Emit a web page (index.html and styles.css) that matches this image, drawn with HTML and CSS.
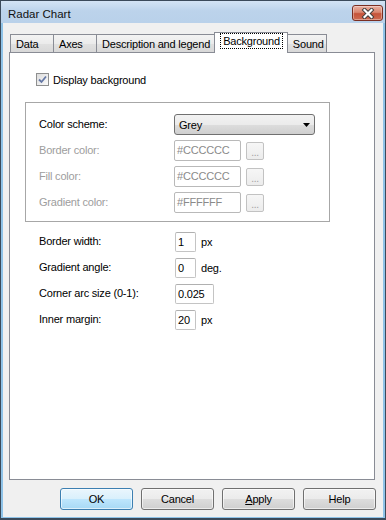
FILE: index.html
```html
<!DOCTYPE html>
<html lang="en">
<head>
  <meta charset="UTF-8" />
  <title>Radar Chart</title>
  <link rel="stylesheet" href="styles.css">
</head>
<body>

  <div class="window">
    <div class="titlebar">
      <span class="title">Radar Chart</span>
      <div class="close">
        <svg width="14" height="11" viewBox="0 0 14 11">
          <path d="M3.5 2 L10.5 9 M10.5 2 L3.5 9" stroke="#3b3b3b" stroke-width="4" stroke-linecap="square"/>
          <path d="M3.5 2 L10.5 9 M10.5 2 L3.5 9" stroke="#ffffff" stroke-width="2.2" stroke-linecap="square"/>
        </svg>
      </div>
    </div>

    <div class="client">
      <div class="tabs">
        <div class="tab wide">Data</div>
        <div class="tab wide">Axes</div>
        <div class="tab">Description and legend</div>
        <div class="tab active"><span class="focus">Background</span></div>
        <div class="tab last">Sound</div>
      </div>

      <div class="panel">
        <div class="check">
          <span class="box">
            <svg width="11" height="11" viewBox="0 0 11 11">
              <path d="M2 5.5 L4.5 8 L9 2.5" fill="none" stroke="#6578a6" stroke-width="1.8"/>
            </svg>
          </span>
          Display background
        </div>

        <div class="group">
          <div class="row">
            <span class="label">Color scheme:</span>
            <div class="select">
              <span>Grey</span>
              <svg width="7" height="4" viewBox="0 0 7 4"><polygon points="0,0 7,0 3.5,4" fill="#000"/></svg>
            </div>
          </div>
          <div class="row disabled">
            <span class="label">Border color:</span>
            <span class="color-input">#CCCCCC</span>
            <span class="dots">...</span>
          </div>
          <div class="row disabled">
            <span class="label">Fill color:</span>
            <span class="color-input">#CCCCCC</span>
            <span class="dots">...</span>
          </div>
          <div class="row disabled">
            <span class="label">Gradient color:</span>
            <span class="color-input">#FFFFFF</span>
            <span class="dots">...</span>
          </div>
        </div>

        <div class="settings">
          <div class="setting">
            <span class="label">Border width:</span>
            <span class="field small">1</span>
            <span class="unit">px</span>
          </div>
          <div class="setting">
            <span class="label">Gradient angle:</span>
            <span class="field small">0</span>
            <span class="unit">deg.</span>
          </div>
          <div class="setting">
            <span class="label">Corner arc size (0-1):</span>
            <span class="field medium">0.025</span>
          </div>
          <div class="setting">
            <span class="label">Inner margin:</span>
            <span class="field small">20</span>
            <span class="unit">px</span>
          </div>
        </div>
      </div>

      <div class="buttons">
        <div class="button default">OK</div>
        <div class="button">Cancel</div>
        <div class="button"><u>A</u>pply</div>
        <div class="button">Help</div>
      </div>
    </div>
  </div>

</body>
</html>
```

FILE: styles.css
```css
body {
  margin: 0;
  font-family: "Liberation Sans", Arial, sans-serif;
  font-size: 11px;
  letter-spacing: -0.2px;
  color: #000;
}

.window {
  width: 386px;
  height: 520px;
  box-sizing: border-box;
  border: 1px solid #3b4a5a;
  border-bottom-width: 2px;
  display: flex;
  flex-direction: column;
  background: #bcd3ea;
}

.titlebar {
  height: 22px;
  flex-shrink: 0;
  display: flex;
  justify-content: space-between;
  align-items: flex-start;
  padding: 0 2px 0 7px;
  background: linear-gradient(#d3e3f4, #bcd3eb 45%, #b9d1ea);
}

.title {
  font-size: 11.5px;
  letter-spacing: 0;
  line-height: 14px;
  margin-top: 6px;
  color: #111;
}

.close {
  width: 31px;
  height: 16px;
  margin-top: 4px;
  box-sizing: border-box;
  border: 1px solid #7a2e22;
  border-radius: 3px;
  background: linear-gradient(#eab0a2, #d98670 45%, #c5533a 55%, #cf6b52);
  box-shadow: inset 0 0 0 1px rgba(255, 255, 255, 0.35);
  display: flex;
  align-items: center;
  justify-content: center;
}

.client {
  flex: 1;
  display: flex;
  flex-direction: column;
  background: #f0f0f0;
  border: 2px solid #8fc3e8;
  border-top: 0;
  border-bottom-width: 1px;
  padding: 9px 8px 7px 6px;
}

.tabs {
  display: flex;
  align-items: flex-end;
  height: 21px;
  margin-left: 1px;
  margin-bottom: -1px;
  position: relative;
  z-index: 1;
}

.tab {
  height: 18px;
  box-sizing: border-box;
  margin: 0 -1px 1px 0;
  padding: 2px 4px 0 5px;
  line-height: 14px;
  border: 1px solid #898c95;
  border-bottom: 0;
  background: linear-gradient(#f3f3f3, #ebebeb 50%, #e1e1e1 50%, #d8d8d8);
  white-space: nowrap;
}

.tab.wide {
  min-width: 44px;
}

.tab.last {
  padding-right: 2px;
}

.tab.active {
  height: 21px;
  margin-bottom: 0;
  padding: 1px 5px 0 6px;
  background: #fff;
  position: relative;
  z-index: 2;
}

.focus {
  display: inline-block;
  line-height: 14px;
  padding: 0 2px;
  outline: 1px dotted #000;
}

.panel {
  height: 428px;
  box-sizing: border-box;
  border: 1px solid #898c95;
  background: #fff;
  padding: 20px 0 0 15px;
}

.check {
  display: flex;
  align-items: center;
  gap: 4px;
  height: 13px;
  margin-left: 11px;
}

.box {
  width: 13px;
  height: 13px;
  box-sizing: border-box;
  border: 1px solid #8e8f8f;
  background: linear-gradient(135deg, #dcdcdc, #fbfbfb);
  display: flex;
  align-items: center;
  justify-content: center;
}

.group {
  width: 305px;
  box-sizing: border-box;
  margin: 16px 0 0 0;
  border: 1px solid #a7a7a7;
  padding: 11px 0 8px 13px;
  display: flex;
  flex-direction: column;
  gap: 5px;
}

.row {
  display: flex;
  align-items: center;
  height: 21px;
}

.row .label {
  width: 135px;
  margin-top: -2px;
}

.row.disabled .label {
  color: #9d9d9d;
}

.select {
  width: 141px;
  height: 21px;
  box-sizing: border-box;
  border: 1px solid #707070;
  border-radius: 3px;
  background: linear-gradient(#f2f2f2, #ebebeb 50%, #dddddd 50%, #cfcfcf);
  display: flex;
  align-items: center;
  justify-content: space-between;
  padding: 0 4px 0 4px;
}

.color-input {
  width: 67px;
  height: 21px;
  box-sizing: border-box;
  border: 1px solid #b9b9b9;
  border-radius: 2px;
  padding-left: 2px;
  line-height: 19px;
  color: #8a8a8a;
}

.dots {
  width: 18px;
  height: 18px;
  box-sizing: border-box;
  margin-left: 5px;
  border: 1px solid #c2c2c2;
  border-radius: 2px;
  background: linear-gradient(#f6f6f6, #ececec);
  color: #a0a0a0;
  font-size: 10px;
  text-align: center;
  line-height: 19px;
}

.settings {
  margin: 10px 0 0 14px;
  display: flex;
  flex-direction: column;
  gap: 6px;
}

.setting {
  display: flex;
  align-items: center;
  height: 20px;
}

.setting .label {
  width: 136px;
  margin-top: -2px;
}

.field {
  height: 20px;
  box-sizing: border-box;
  border: 1px solid #c4c4c4;
  border-top-color: #b0b0b0;
  border-radius: 2px;
  padding-left: 2px;
  line-height: 18px;
}

.field.small {
  width: 21px;
}

.field.medium {
  width: 39px;
}

.unit {
  margin-left: 5px;
}

.buttons {
  display: flex;
  justify-content: flex-end;
  gap: 8px;
  margin: 8px -1px 0 0;
}

.button {
  width: 73px;
  height: 22px;
  box-sizing: border-box;
  border: 1px solid #707070;
  border-radius: 3px;
  background: linear-gradient(#f2f2f2, #ebebeb 50%, #dddddd 50%, #cfcfcf);
  box-shadow: inset 0 0 0 1px rgba(255, 255, 255, 0.6);
  text-align: center;
  line-height: 20px;
}

.button.default {
  border-color: #3c7fb1;
  background: linear-gradient(#eaf6fd, #d9f0fc 50%, #bee6fd 50%, #a7d9f5);
}
```
